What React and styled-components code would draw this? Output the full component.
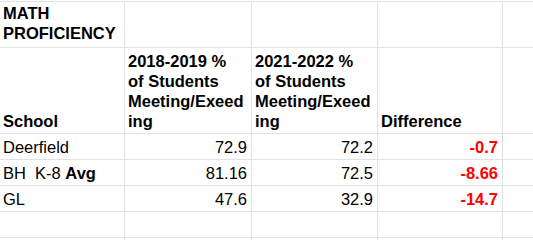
import styled, { createGlobalStyle } from "styled-components";

const GlobalStyle = createGlobalStyle`
    html, body {
        margin: 0;
        padding: 0;
        background: #ffffff;
    }
    body {
        font-family: "Liberation Sans", Arial, sans-serif;
    }
`;

const Sheet = styled.div`
    margin-top: 1px;
    border-top: 1px solid #e2e2e2;
    width: 533px;
    height: 239px;
    box-sizing: border-box;
    overflow: hidden;
    display: grid;
    grid-template-columns: 125px 127px 126px 125px 1fr;
    grid-template-rows: 46px 86px 26px 26px 26px 26px 1fr;
`;

const Cell = styled.div`
    box-sizing: border-box;
    border-right: ${props => props.$last ? "none" : "1px solid #e2e2e2"};
    border-bottom: 1px solid #e2e2e2;
    display: flex;
    flex-direction: column;
    justify-content: flex-end;
    align-items: ${props => props.$num ? "flex-end" : "flex-start"};
    padding: 0 4px ${props => props.$pb ?? 2}px 3px;
    font-size: 16.5px;
    line-height: 20px;
    color: ${props => props.$red ? "#ff0000" : "#000000"};
    font-weight: ${props => props.$bold ? 700 : 400};
    white-space: pre;
    overflow: hidden;
`;

const Strong = styled.b`
    font-weight: 700;
`;

const data = [
    { school: "Deerfield", a: "72.9", b: "72.2", diff: "-0.7" },
    { school: <span>BH  K-8 <Strong>Avg</Strong></span>, a: "81.16", b: "72.5", diff: "-8.66" },
    { school: "GL", a: "47.6", b: "32.9", diff: "-14.7" },
];

function Row({ r }) {
    return (
        <>
            <Cell>{r.school}</Cell>
            <Cell $num>{r.a}</Cell>
            <Cell $num>{r.b}</Cell>
            <Cell $num $red $bold>{r.diff}</Cell>
            <Cell $last />
        </>
    );
}

function App() {
    return (
        <>
            <GlobalStyle />
            <Sheet>
                <Cell $bold $pb={4}>{"MATH\nPROFICIENCY"}</Cell>
                <Cell />
                <Cell />
                <Cell />
                <Cell $last />

                <Cell $bold>School</Cell>
                <Cell $bold>{"2018-2019 %\nof Students\nMeeting/Exeed\ning"}</Cell>
                <Cell $bold>{"2021-2022 %\nof Students\nMeeting/Exeed\ning"}</Cell>
                <Cell $bold>Difference</Cell>
                <Cell $last />

                {data.map((r, i) => (
                    <Row key={i} r={r} />
                ))}

                {[0, 1].map(i => (
                    [0, 1, 2, 3, 4].map(j => <Cell key={`e${i}${j}`} $last={j === 4} />)
                ))}
            </Sheet>
        </>
    );
}

export default App;
